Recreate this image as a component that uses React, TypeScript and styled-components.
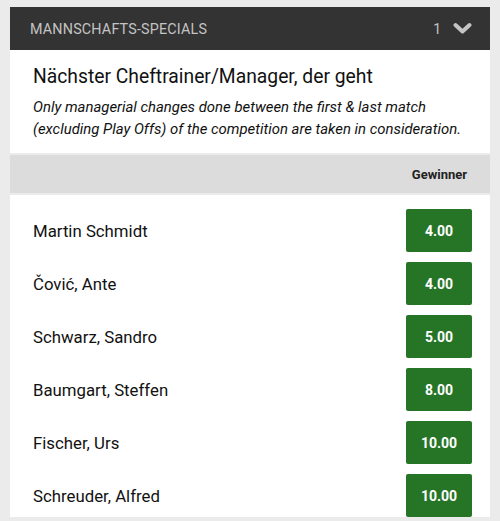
import * as React from "react";
import styled, { createGlobalStyle } from "styled-components";

interface Outcome {
  name: string;
  odds: string;
}

const outcomes: Outcome[] = [
  { name: "Martin Schmidt", odds: "4.00" },
  { name: "Čović, Ante", odds: "4.00" },
  { name: "Schwarz, Sandro", odds: "5.00" },
  { name: "Baumgart, Steffen", odds: "8.00" },
  { name: "Fischer, Urs", odds: "10.00" },
  { name: "Schreuder, Alfred", odds: "10.00" },
];

const GlobalStyle = createGlobalStyle`
  html, body {
    margin: 0;
    padding: 0;
    background: #ebebeb;
    font-family: Roboto, "Liberation Sans", sans-serif;
    overflow: hidden;
  }
`;

const Page = styled.div`
  padding: 7px 10px 0 10px;
  height: 521px;
  box-sizing: border-box;
`;

const Header = styled.div`
  display: flex;
  align-items: center;
  height: 43px;
  padding: 0 18px 0 20px;
  background: #333333;
  color: #c4c4c4;
`;

const HeaderTitle = styled.span`
  flex: 1;
  font-size: 14.3px;
  letter-spacing: 0.2px;
  text-transform: uppercase;
`;

const HeaderCount = styled.span`
  font-size: 14px;
  margin-right: 12px;
`;

const Intro = styled.div`
  background: #ffffff;
  padding: 16px 23px 13px 23px;
`;

const Title = styled.h2`
  margin: 0 0 8px 0;
  font-size: 19.3px;
  line-height: 22px;
  font-weight: 400;
  color: #111;
`;

const Note = styled.p`
  margin: 0;
  font-size: 14.9px;
  font-style: italic;
  line-height: 22px;
  color: #111;
`;

const ColumnBar = styled.div`
  display: flex;
  justify-content: flex-end;
  align-items: center;
  height: 38px;
  margin-top: 2px;
  padding: 0 23px;
  background: #dcdcdc;
  font-size: 13px;
  font-weight: 700;
  color: #222;
`;

const List = styled.div`
  background: #ffffff;
  margin-top: 2px;
  padding-top: 14px;
  display: flex;
  flex-direction: column;
  gap: 10px;
`;

const Row = styled.div`
  display: flex;
  align-items: center;
  padding: 0 18px 0 23px;
`;

const Name = styled.span`
  flex: 1;
  font-size: 16.8px;
  color: #111;
`;

const OddsButton = styled.button`
  width: 66px;
  height: 43px;
  border: none;
  border-radius: 2px;
  background: #267526;
  color: #ffffff;
  font-family: Roboto, "Liberation Sans", sans-serif;
  font-size: 14px;
  font-weight: 700;
  cursor: pointer;
`;

const Chevron = (): JSX.Element => (
  <svg width="19" height="13" viewBox="0 0 19 13">
    <path d="M2.5 3 L9.5 9.5 L16.5 3" fill="none" stroke="#c4c4c4" strokeWidth="4" strokeLinecap="round" strokeLinejoin="round" />
  </svg>
);

const App = (): JSX.Element => (
  <Page>
    <GlobalStyle />
    <Header>
      <HeaderTitle>Mannschafts-Specials</HeaderTitle>
      <HeaderCount>1</HeaderCount>
      <Chevron />
    </Header>
    <Intro>
      <Title>Nächster Cheftrainer/Manager, der geht</Title>
      <Note>
        Only managerial changes done between the first &amp; last match (excluding Play Offs) of the competition are
        taken in consideration.
      </Note>
    </Intro>
    <ColumnBar>Gewinner</ColumnBar>
    <List>
      {outcomes.map((o) => (
        <Row key={o.name}>
          <Name>{o.name}</Name>
          <OddsButton>{o.odds}</OddsButton>
        </Row>
      ))}
    </List>
  </Page>
);

export default App;
